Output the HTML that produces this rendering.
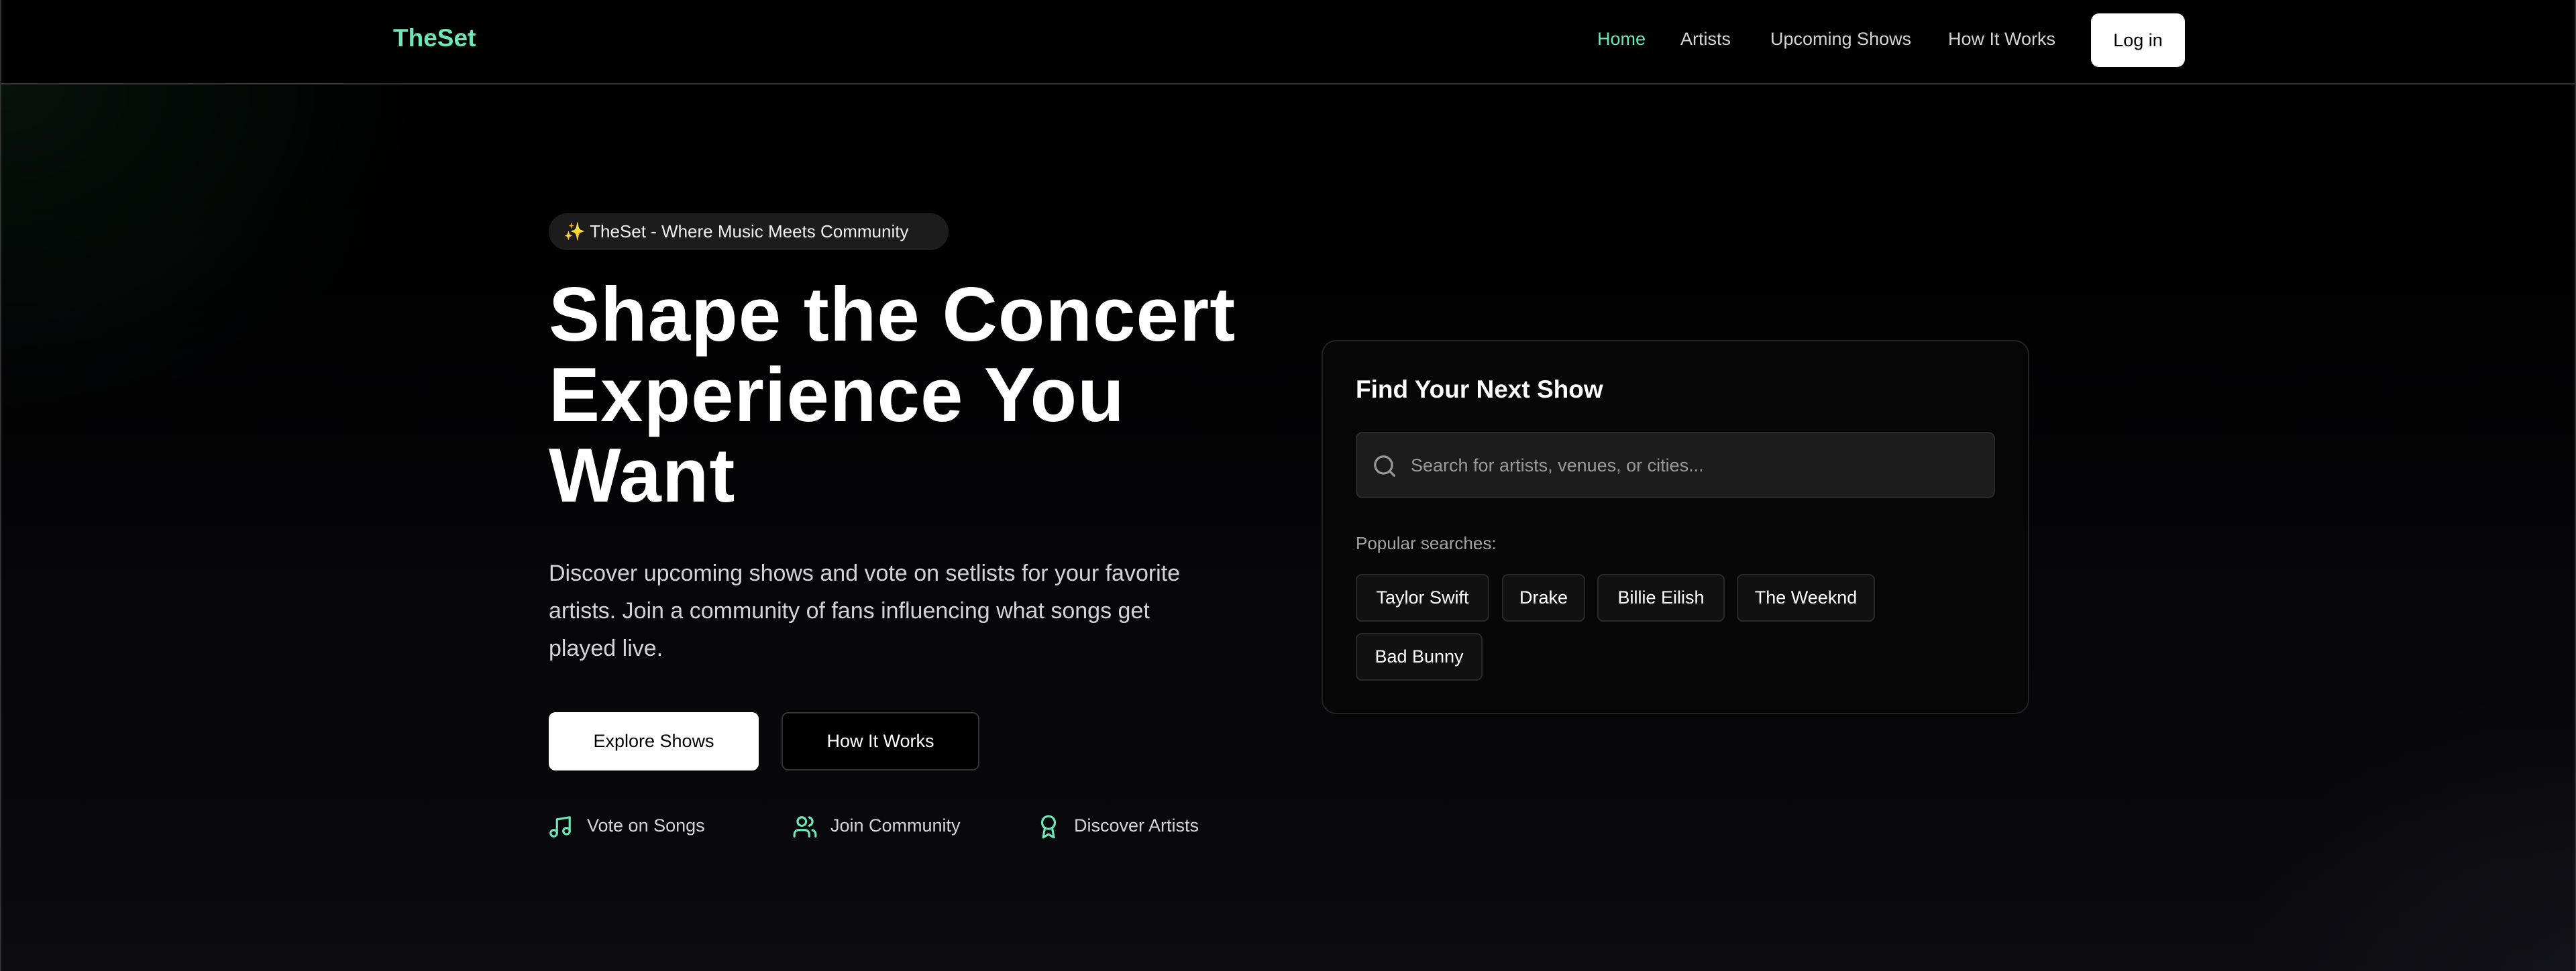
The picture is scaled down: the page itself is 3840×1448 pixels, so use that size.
<!DOCTYPE html>
<html><head><meta charset="utf-8"><style>
*{margin:0;padding:0;box-sizing:border-box}
html,body{width:3840px;height:1448px;overflow:hidden}
body{font-family:"Liberation Sans",sans-serif;color:#fff;position:relative;
background:radial-gradient(ellipse 900px 700px at 0px 124px,rgba(20,60,40,.3),transparent 70%),
radial-gradient(ellipse 700px 600px at 3840px 1448px,rgba(40,40,50,.25),transparent 70%),
linear-gradient(#000 0,#000 300px,#0b0b10 1448px);border-left:2px solid #333;border-right:2px solid #333}
nav{position:absolute;left:0;right:0;top:0;height:126px;background:#000;border-bottom:2px solid #333}
.logo{position:absolute;left:584px;top:36px;font-size:37px;font-weight:bold;color:#6ee7b7}
.nl{position:absolute;top:43px;font-size:27px;color:#d4d4d4}
.login{position:absolute;left:3115px;top:20px;width:140px;height:80px;background:#fff;color:#000;border-radius:12px;font-size:27px;display:flex;align-items:center;justify-content:center;font-weight:500}
.badge{position:absolute;left:816px;top:318px;width:596px;height:55px;border-radius:28px;background:#1c1c1c;font-size:26px;color:#eee;display:flex;align-items:center;padding-left:22px}
h1{position:absolute;left:816px;top:410px;font-size:114px;line-height:120px;font-weight:bold;letter-spacing:1px;width:1150px}
p.d{position:absolute;left:816px;top:827px;width:960px;font-size:34px;line-height:56px;color:#d4d4d4}
.btn{position:absolute;top:1062px;height:87px;border-radius:10px;font-size:27px;display:flex;align-items:center;justify-content:center;font-weight:500}
.f{position:absolute;top:1216px;font-size:27px;color:#d4d4d4}
.ic{position:absolute;top:1214px}
.card{position:absolute;left:1968px;top:507px;width:1055px;height:558px;border:2px solid #222;border-radius:22px;background:rgba(8,8,8,.8)}
.ct{position:absolute;left:2019px;top:560px;font-size:37px;font-weight:bold}
.search{position:absolute;left:2019px;top:644px;width:953px;height:99px;background:#1c1c1c;border:2px solid #2a2a2a;border-radius:10px}
.ph{position:absolute;left:80px;top:33px;font-size:27px;color:#9a9a9a}
.pop{position:absolute;left:2019px;top:795px;font-size:26px;color:#a3a3a3}
.chip{position:absolute;height:71px;background:#111;border:2px solid #2a2a2a;border-radius:9px;font-size:27px;font-weight:500;display:flex;align-items:center;justify-content:center}
</style></head><body>
<nav>
<div class="logo">TheSet</div>
<div class="nl" style="left:2379px;color:#6ee7b7">Home</div>
<div class="nl" style="left:2503px">Artists</div>
<div class="nl" style="left:2637px">Upcoming Shows</div>
<div class="nl" style="left:2902px">How It Works</div>
<div class="login">Log in</div>
</nav>
<div class="badge">✨ TheSet - Where Music Meets Community</div>
<h1>Shape the Concert Experience You Want</h1>
<p class="d">Discover upcoming shows and vote on setlists for your favorite artists. Join a community of fans influencing what songs get played live.</p>
<div class="btn" style="left:816px;width:313px;background:#fff;color:#000">Explore Shows</div>
<div class="btn" style="left:1163px;width:295px;background:#000;border:2px solid #333;color:#fff">How It Works</div>
<svg class="ic" style="left:814px" width="38" height="38" viewBox="0 0 24 24" fill="none" stroke="#6ee7b7" stroke-width="2" stroke-linecap="round" stroke-linejoin="round"><path d="M9 18V5l12-2v13"/><circle cx="6" cy="18" r="3"/><circle cx="18" cy="16" r="3"/></svg>
<div class="f" style="left:873px">Vote on Songs</div>
<svg class="ic" style="left:1179px" width="38" height="38" viewBox="0 0 24 24" fill="none" stroke="#6ee7b7" stroke-width="2" stroke-linecap="round" stroke-linejoin="round"><path d="M16 21v-2a4 4 0 0 0-4-4H6a4 4 0 0 0-4 4v2"/><circle cx="9" cy="7" r="4"/><path d="M22 21v-2a4 4 0 0 0-3-3.87"/><path d="M16 3.13a4 4 0 0 1 0 7.75"/></svg>
<div class="f" style="left:1236px">Join Community</div>
<svg class="ic" style="left:1542px" width="38" height="38" viewBox="0 0 24 24" fill="none" stroke="#6ee7b7" stroke-width="2" stroke-linecap="round" stroke-linejoin="round"><circle cx="12" cy="8" r="6"/><path d="M15.5 12.9 17 22l-5-3-5 3 1.5-9.1"/></svg>
<div class="f" style="left:1599px">Discover Artists</div>
<div class="card"></div>
<div class="ct">Find Your Next Show</div>
<div class="search">
<svg style="position:absolute;left:22px;top:30px" width="38" height="38" viewBox="0 0 24 24" fill="none" stroke="#9a9a9a" stroke-width="2" stroke-linecap="round"><circle cx="11" cy="11" r="8"/><path d="m21 21-4.3-4.3"/></svg>
<div class="ph">Search for artists, venues, or cities...</div></div>
<div class="pop">Popular searches:</div>
<div class="chip" style="left:2019px;top:856px;width:199px">Taylor Swift</div>
<div class="chip" style="left:2237px;top:856px;width:124px">Drake</div>
<div class="chip" style="left:2379px;top:856px;width:190px">Billie Eilish</div>
<div class="chip" style="left:2587px;top:856px;width:206px">The Weeknd</div>
<div class="chip" style="left:2019px;top:944px;width:189px">Bad Bunny</div>
</body></html>
